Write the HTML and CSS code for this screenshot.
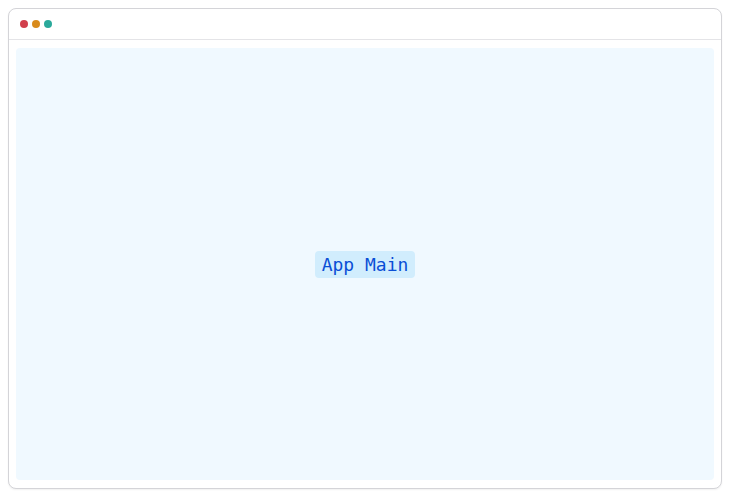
FILE: index.html
```html
<!DOCTYPE html>
<html>
<head>
<meta charset="utf-8">
<link rel="stylesheet" href="styles.css">
</head>
<body>
<div class="window">
  <div class="titlebar">
    <span class="dot dot-red"></span>
    <span class="dot dot-orange"></span>
    <span class="dot dot-teal"></span>
  </div>
  <div class="body">
    <div class="main">
      <span class="label">App Main</span>
    </div>
  </div>
</div>
</body>
</html>
```
FILE: styles.css
```css
html, body {
  margin: 0;
  padding: 0;
  background: #ffffff;
}
body {
  padding: 8px;
  font-family: "DejaVu Sans Mono", monospace;
}
.window {
  width: 714px;
  height: 481px;
  box-sizing: border-box;
  border: 1px solid #d4d4d8;
  border-radius: 8px;
  background: #ffffff;
  box-shadow: 0 1px 2px rgba(0,0,0,0.06);
  display: flex;
  flex-direction: column;
  overflow: hidden;
}
.titlebar {
  height: 30px;
  flex: none;
  border-bottom: 1px solid #e4e4e7;
  display: flex;
  align-items: center;
  gap: 4px;
  padding-left: 11px;
}
.dot {
  width: 8px;
  height: 8px;
  border-radius: 50%;
  display: block;
}
.dot-red { background: #d13f4c; }
.dot-orange { background: #d98b1c; }
.dot-teal { background: #2aa99b; }
.body {
  flex: 1;
  padding: 8px 7px;
  display: flex;
}
.main {
  flex: 1;
  background: #f0f9ff;
  border-radius: 4px;
  display: flex;
  align-items: center;
  justify-content: center;
}
.label {
  font-family: "DejaVu Sans Mono", monospace;
  font-size: 18px;
  color: #0a4fd6;
  background: #d1edfd;
  border-radius: 4px;
  padding: 2px 7px;
  line-height: 23px;
}
```
